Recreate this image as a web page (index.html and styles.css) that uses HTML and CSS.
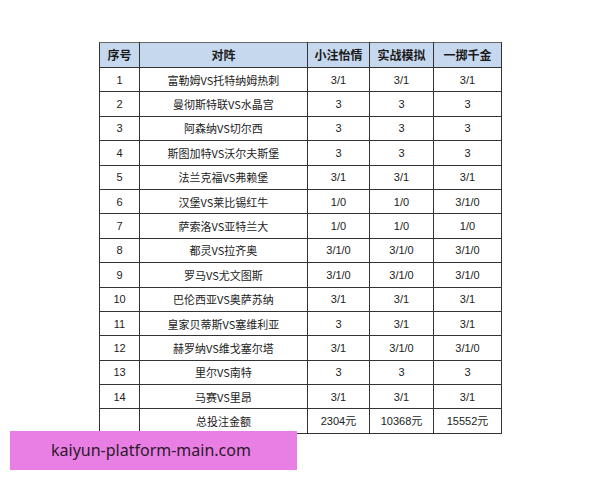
FILE: index.html
```html
<!DOCTYPE html>
<html lang="zh">
<head>
<meta charset="utf-8">
<link rel="stylesheet" href="styles.css">
</head>
<body>
<div class="page">
  <table class="grid">
    <colgroup>
      <col class="c-no"><col class="c-match"><col class="c-a"><col class="c-b"><col class="c-c">
    </colgroup>
    <thead>
      <tr><th>序号</th><th>对阵</th><th>小注怡情</th><th>实战模拟</th><th>一掷千金</th></tr>
    </thead>
    <tbody>
      <tr><td>1</td><td>富勒姆VS托特纳姆热刺</td><td>3/1</td><td>3/1</td><td>3/1</td></tr>
      <tr><td>2</td><td>曼彻斯特联VS水晶宫</td><td>3</td><td>3</td><td>3</td></tr>
      <tr><td>3</td><td>阿森纳VS切尔西</td><td>3</td><td>3</td><td>3</td></tr>
      <tr><td>4</td><td>斯图加特VS沃尔夫斯堡</td><td>3</td><td>3</td><td>3</td></tr>
      <tr><td>5</td><td>法兰克福VS弗赖堡</td><td>3/1</td><td>3/1</td><td>3/1</td></tr>
      <tr><td>6</td><td>汉堡VS莱比锡红牛</td><td>1/0</td><td>1/0</td><td>3/1/0</td></tr>
      <tr><td>7</td><td>萨索洛VS亚特兰大</td><td>1/0</td><td>1/0</td><td>1/0</td></tr>
      <tr><td>8</td><td>都灵VS拉齐奥</td><td>3/1/0</td><td>3/1/0</td><td>3/1/0</td></tr>
      <tr><td>9</td><td>罗马VS尤文图斯</td><td>3/1/0</td><td>3/1/0</td><td>3/1/0</td></tr>
      <tr><td>10</td><td>巴伦西亚VS奥萨苏纳</td><td>3/1</td><td>3/1</td><td>3/1</td></tr>
      <tr><td>11</td><td>皇家贝蒂斯VS塞维利亚</td><td>3</td><td>3/1</td><td>3/1</td></tr>
      <tr><td>12</td><td>赫罗纳VS维戈塞尔塔</td><td>3/1</td><td>3/1/0</td><td>3/1/0</td></tr>
      <tr><td>13</td><td>里尔VS南特</td><td>3</td><td>3</td><td>3</td></tr>
      <tr><td>14</td><td>马赛VS里昂</td><td>3/1</td><td>3/1</td><td>3/1</td></tr>
      <tr><td></td><td>总投注金额</td><td>2304元</td><td>10368元</td><td>15552元</td></tr>
    </tbody>
  </table>
  <div class="watermark">kaiyun-platform-main.com</div>
</div>
</body>
</html>
```

FILE: styles.css
```css
html, body {
  margin: 0;
  padding: 0;
  background: #ffffff;
}
.page {
  position: relative;
  width: 600px;
  height: 480px;
  padding: 42px 0 0 99px;
  box-sizing: border-box;
}
.grid {
  border-collapse: collapse;
  table-layout: fixed;
  width: 402px;
  font-family: "Liberation Sans", "Noto Sans CJK SC", sans-serif;
  font-size: 11px;
  color: #222;
}
.c-no { width: 40px; }
.c-match { width: 168px; }
.c-a { width: 62px; }
.c-b { width: 64px; }
.c-c { width: 68px; }
.grid th, .grid td {
  border: 1px solid #333;
  text-align: center;
  padding: 0;
  line-height: 14px;
}
.grid th {
  background: #c6d8ee;
  height: 24px;
  font-family: "Noto Sans CJK SC", sans-serif;
  font-weight: 700;
  font-size: 12px;
  color: #1a1a1a;
}
.grid td {
  height: 23.4px;
}
.grid td:nth-child(2) {
  font-family: "Noto Sans CJK SC", sans-serif;
  font-size: 11px;
}
.grid thead tr th {
  border-top: 1px solid #666;
}
.watermark {
  position: absolute;
  left: 10px;
  top: 431px;
  width: 287px;
  height: 39px;
  background: #e97fe4;
  color: #2a1a2a;
  font-family: "Noto Sans", sans-serif;
  font-size: 16px;
  line-height: 39px;
  padding-left: 41px;
  box-sizing: border-box;
}
```
